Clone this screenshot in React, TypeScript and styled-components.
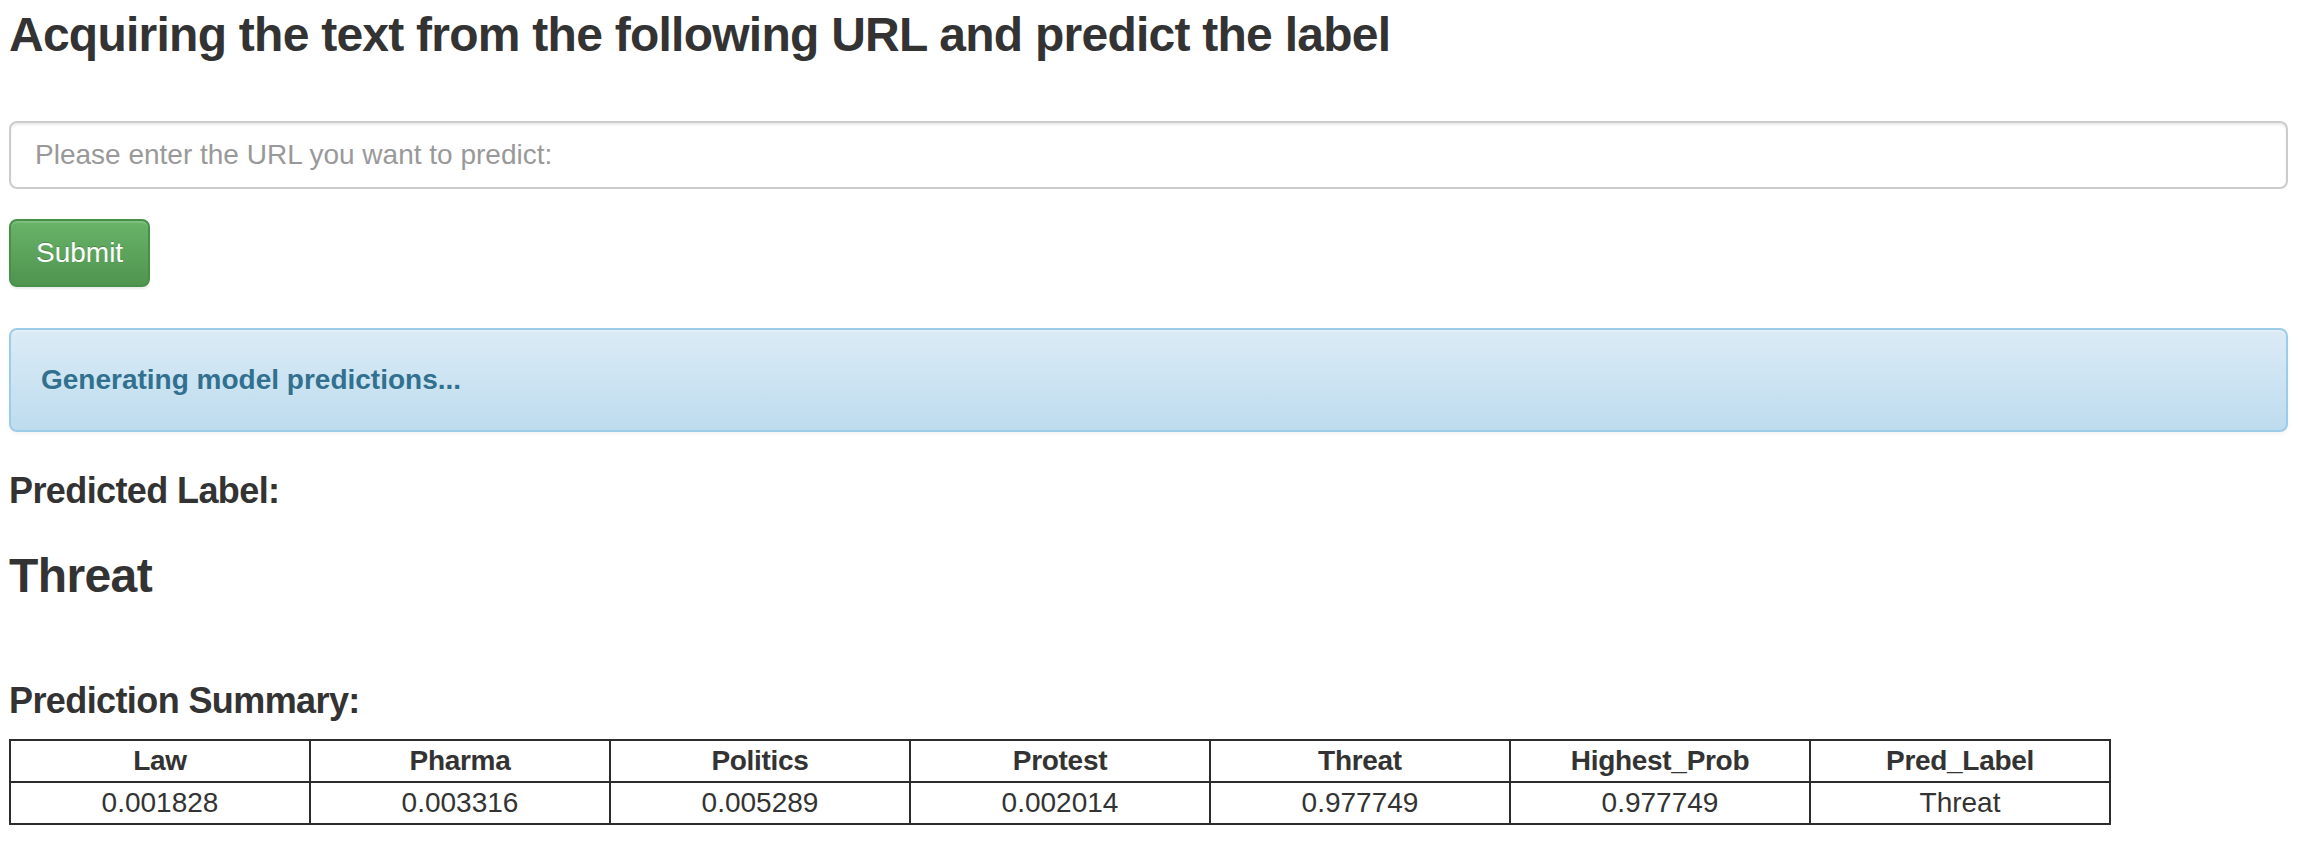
import React from "react";
import styled, { createGlobalStyle } from "styled-components";

const GlobalStyle = createGlobalStyle`
  html, body {
    margin: 0;
    padding: 0;
    background: #ffffff;
  }
  body {
    font-family: "Liberation Sans", Arial, Helvetica, sans-serif;
    font-size: 28px;
    line-height: 40px;
    color: #333333;
  }
  * { box-sizing: border-box; }
`;

const Page = styled.div`
  display: flex;
  flex-direction: column;
  align-items: stretch;
  padding: 9px 16px 0 9px;
`;

const Title = styled.h1`
  margin: 0 0 59px 0;
  font-size: 48px;
  line-height: 1.1;
  font-weight: 700;
  letter-spacing: -0.75px;
  color: #333333;
`;

const UrlInput = styled.input`
  display: block;
  width: 100%;
  height: 68px;
  margin: 0 0 30px 0;
  padding: 12px 24px;
  font-family: inherit;
  font-size: 28px;
  line-height: 40px;
  color: #555555;
  background: #ffffff;
  border: 2px solid #cccccc;
  border-radius: 8px;
  box-shadow: inset 0 2px 2px rgba(0, 0, 0, 0.075);
  outline: none;
  &::placeholder {
    color: #999999;
  }
`;

const ButtonRow = styled.div`
  display: flex;
  margin: 0 0 41px 0;
`;

const SubmitButton = styled.button`
  height: 68px;
  padding: 12px 25px;
  font-family: inherit;
  font-size: 28px;
  line-height: 40px;
  color: #ffffff;
  background-image: linear-gradient(to bottom, #69b469 0%, #4f944f 100%);
  border: 2px solid #47904a;
  border-radius: 8px;
  text-shadow: 0 -1px 0 rgba(0, 0, 0, 0.2);
  box-shadow: inset 0 2px 0 rgba(255, 255, 255, 0.15), 0 2px 2px rgba(0, 0, 0, 0.075);
  cursor: pointer;
`;

const InfoAlert = styled.div`
  padding: 30px 39px 30px 30px;
  margin: 0 0 39px 0;
  font-weight: 700;
  font-size: 28px;
  line-height: 40px;
  color: #31708f;
  background-image: linear-gradient(to bottom, #dbebf6 0%, #bddcee 100%);
  border: 2px solid #9dcce8;
  border-radius: 8px;
  text-shadow: 0 1px 0 rgba(255, 255, 255, 0.2);
  box-shadow: inset 0 2px 0 rgba(255, 255, 255, 0.25), 0 2px 4px rgba(0, 0, 0, 0.05);
`;

const SectionLabel = styled.h4<{ $gap: number }>`
  margin: 0 0 ${(p) => p.$gap}px 0;
  font-size: 36px;
  line-height: 1.1;
  font-weight: 700;
  letter-spacing: -0.6px;
  color: #333333;
`;

const PredictedValue = styled.h3`
  margin: 0 0 78px 0;
  font-size: 48px;
  line-height: 1.1;
  font-weight: 700;
  letter-spacing: -0.6px;
  color: #333333;
`;

const SummaryTable = styled.table`
  border-collapse: collapse;
  table-layout: fixed;
  width: 2102px;
  font-size: 28px;
  line-height: 40px;
  color: #333333;
`;

const HeadCell = styled.th`
  width: 300px;
  padding: 0;
  font-weight: 700;
  text-align: center;
  border: 2px solid #2c2c2c;
  letter-spacing: -0.3px;
`;

const BodyCell = styled.td`
  width: 300px;
  padding: 0;
  text-align: center;
  border: 2px solid #2c2c2c;
`;

const columns = ["Law", "Pharma", "Politics", "Protest", "Threat", "Highest_Prob", "Pred_Label"];
const values = ["0.001828", "0.003316", "0.005289", "0.002014", "0.977749", "0.977749", "Threat"];

export default function App() {
  return (
    <>
      <GlobalStyle />
      <Page>
        <Title>Acquiring the text from the following URL and predict the label</Title>
        <UrlInput type="text" placeholder="Please enter the URL you want to predict:" />
        <ButtonRow>
          <SubmitButton type="button">Submit</SubmitButton>
        </ButtonRow>
        <InfoAlert>Generating model predictions...</InfoAlert>
        <SectionLabel $gap={40}>Predicted Label:</SectionLabel>
        <PredictedValue>Threat</PredictedValue>
        <SectionLabel $gap={18}>Prediction Summary:</SectionLabel>
        <div>
          <SummaryTable>
            <thead>
              <tr>
                {columns.map((c) => (
                  <HeadCell key={c}>{c}</HeadCell>
                ))}
              </tr>
            </thead>
            <tbody>
              <tr>
                {values.map((v, i) => (
                  <BodyCell key={i}>{v}</BodyCell>
                ))}
              </tr>
            </tbody>
          </SummaryTable>
        </div>
      </Page>
    </>
  );
}
